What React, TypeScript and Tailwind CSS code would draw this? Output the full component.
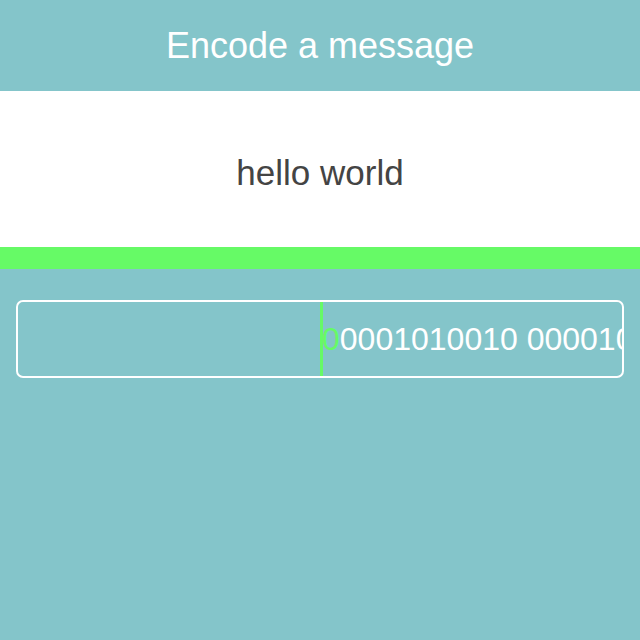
export default function App() {
  const bits = '00001010010 0000100101 0001100011'
  return (
    <div className="flex h-[640px] w-[640px] flex-col bg-[#84c5ca] font-['Liberation_Sans',Arial,sans-serif]">
      <header className="flex h-[91px] items-center justify-center text-[36px] text-white">
        Encode a message
      </header>
      <div className="flex h-[156px] items-center justify-center bg-white pt-2 text-[35px] text-[#444444]">
        hello world
      </div>
      <div className="h-[22px] bg-[#66fa66]" />
      <div className="px-4 pt-[31px]">
        <div className="relative flex h-[78px] items-center overflow-hidden rounded-[7px] border-2 border-white">
          <div className="whitespace-nowrap pl-[304px] text-[32px] text-white">
            <span className="text-[#66fa66]">{bits[0]}</span>
            {bits.slice(1)}
          </div>
          <div className="absolute bottom-0 left-[302px] top-0 w-[3px] bg-[#66fa66]" />
        </div>
      </div>
    </div>
  )
}
